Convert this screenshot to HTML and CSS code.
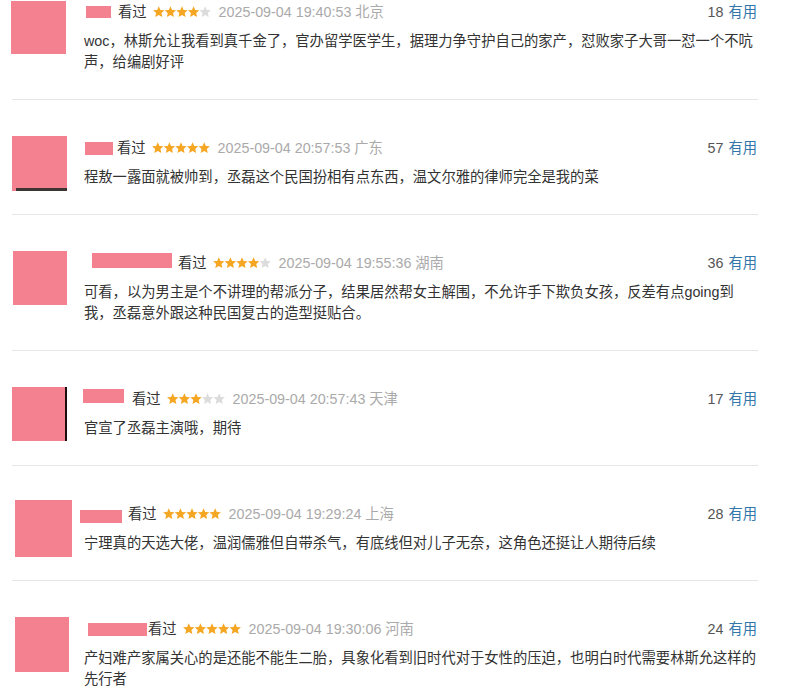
FILE: index.html
```html
<!DOCTYPE html>
<html lang="zh-CN">
<head>
<meta charset="utf-8">
<title>短评</title>
<link rel="stylesheet" href="styles.css">
</head>
<body>
<svg class="defs" width="0" height="0" aria-hidden="true">
  <symbol id="star" viewBox="0 0 12 12">
    <polygon points="6,0.2 7.7,4.05 11.9,4.48 8.76,7.3 9.64,11.42 6,9.3 2.36,11.42 3.24,7.3 0.1,4.48 4.3,4.05"/>
  </symbol>
</svg>
<div class="list">
  <div class="comment first">
    <div class="avatar-col"><div class="avatar av1"></div></div>
    <div class="content">
      <div class="head">
        <span class="name n1"></span><span class="watched">看过</span>
        <svg class="stars" viewBox="0 0 58 12"><use href="#star" class="on" x="0" width="11.6" height="11.6"/><use href="#star" class="on" x="11.6" width="11.6" height="11.6"/><use href="#star" class="on" x="23.2" width="11.6" height="11.6"/><use href="#star" class="on" x="34.8" width="11.6" height="11.6"/><use href="#star" class="off" x="46.4" width="11.6" height="11.6"/></svg>
        <span class="time">2025-09-04 19:40:53 北京</span>
        <span class="votes"><span class="count">18</span><a class="useful">有用</a></span>
      </div>
      <p class="text">woc，林斯允让我看到真千金了，官办留学医学生，据理力争守护自己的家产，怼败家子大哥一怼一个不吭声，给编剧好评</p>
    </div>
  </div>

  <div class="comment">
    <div class="avatar-col"><div class="avatar av2"></div></div>
    <div class="content">
      <div class="head">
        <span class="name n2"></span><span class="watched">看过</span>
        <svg class="stars" viewBox="0 0 58 12"><use href="#star" class="on" x="0" width="11.6" height="11.6"/><use href="#star" class="on" x="11.6" width="11.6" height="11.6"/><use href="#star" class="on" x="23.2" width="11.6" height="11.6"/><use href="#star" class="on" x="34.8" width="11.6" height="11.6"/><use href="#star" class="on" x="46.4" width="11.6" height="11.6"/></svg>
        <span class="time">2025-09-04 20:57:53 广东</span>
        <span class="votes"><span class="count">57</span><a class="useful">有用</a></span>
      </div>
      <p class="text">程敖一露面就被帅到，丞磊这个民国扮相有点东西，温文尔雅的律师完全是我的菜</p>
    </div>
  </div>

  <div class="comment">
    <div class="avatar-col"><div class="avatar av3"></div></div>
    <div class="content">
      <div class="head">
        <span class="name n3"></span><span class="watched">看过</span>
        <svg class="stars" viewBox="0 0 58 12"><use href="#star" class="on" x="0" width="11.6" height="11.6"/><use href="#star" class="on" x="11.6" width="11.6" height="11.6"/><use href="#star" class="on" x="23.2" width="11.6" height="11.6"/><use href="#star" class="on" x="34.8" width="11.6" height="11.6"/><use href="#star" class="off" x="46.4" width="11.6" height="11.6"/></svg>
        <span class="time">2025-09-04 19:55:36 湖南</span>
        <span class="votes"><span class="count">36</span><a class="useful">有用</a></span>
      </div>
      <p class="text">可看，以为男主是个不讲理的帮派分子，结果居然帮女主解围，不允许手下欺负女孩，反差有点going到我，丞磊意外跟这种民国复古的造型挺贴合。</p>
    </div>
  </div>

  <div class="comment">
    <div class="avatar-col"><div class="avatar av4"></div></div>
    <div class="content">
      <div class="head">
        <span class="name n4"></span><span class="watched">看过</span>
        <svg class="stars" viewBox="0 0 58 12"><use href="#star" class="on" x="0" width="11.6" height="11.6"/><use href="#star" class="on" x="11.6" width="11.6" height="11.6"/><use href="#star" class="on" x="23.2" width="11.6" height="11.6"/><use href="#star" class="off" x="34.8" width="11.6" height="11.6"/><use href="#star" class="off" x="46.4" width="11.6" height="11.6"/></svg>
        <span class="time">2025-09-04 20:57:43 天津</span>
        <span class="votes"><span class="count">17</span><a class="useful">有用</a></span>
      </div>
      <p class="text">官宣了丞磊主演哦，期待</p>
    </div>
  </div>

  <div class="comment">
    <div class="avatar-col"><div class="avatar av5"></div></div>
    <div class="content">
      <div class="head">
        <span class="name n5"></span><span class="watched">看过</span>
        <svg class="stars" viewBox="0 0 58 12"><use href="#star" class="on" x="0" width="11.6" height="11.6"/><use href="#star" class="on" x="11.6" width="11.6" height="11.6"/><use href="#star" class="on" x="23.2" width="11.6" height="11.6"/><use href="#star" class="on" x="34.8" width="11.6" height="11.6"/><use href="#star" class="on" x="46.4" width="11.6" height="11.6"/></svg>
        <span class="time">2025-09-04 19:29:24 上海</span>
        <span class="votes"><span class="count">28</span><a class="useful">有用</a></span>
      </div>
      <p class="text">宁理真的天选大佬，温润儒雅但自带杀气，有底线但对儿子无奈，这角色还挺让人期待后续</p>
    </div>
  </div>

  <div class="comment">
    <div class="avatar-col"><div class="avatar av6"></div></div>
    <div class="content">
      <div class="head">
        <span class="name n6"></span><span class="watched">看过</span>
        <svg class="stars" viewBox="0 0 58 12"><use href="#star" class="on" x="0" width="11.6" height="11.6"/><use href="#star" class="on" x="11.6" width="11.6" height="11.6"/><use href="#star" class="on" x="23.2" width="11.6" height="11.6"/><use href="#star" class="on" x="34.8" width="11.6" height="11.6"/><use href="#star" class="on" x="46.4" width="11.6" height="11.6"/></svg>
        <span class="time">2025-09-04 19:30:06 河南</span>
        <span class="votes"><span class="count">24</span><a class="useful">有用</a></span>
      </div>
      <p class="text">产妇难产家属关心的是还能不能生二胎，具象化看到旧时代对于女性的压迫，也明白时代需要林斯允这样的先行者</p>
    </div>
  </div>
</div>
</body>
</html>
```

FILE: styles.css
```css
* {
  box-sizing: border-box;
}

body {
  margin: 0;
  background: #fff;
  font-family: "Liberation Sans", Arial, "Noto Sans CJK SC", sans-serif;
  font-size: 14.3px;
  line-height: 21px;
  color: #333;
}

.defs {
  position: absolute;
  width: 0;
  height: 0;
  overflow: hidden;
}

.list {
  margin-left: 12px;
  width: 746px;
}

.comment {
  display: flex;
  align-items: flex-start;
  padding: 36px 0 22px;
  border-bottom: 1px solid #e6e6e6;
}

.comment.first {
  padding-top: 0;
}

.avatar-col {
  flex: none;
  width: 72px;
}

.avatar {
  width: 55px;
  height: 54px;
  background: #f4818f;
}

.av1 {
  margin-left: -1px;
  margin-top: 1px;
  height: 53px;
}

.av2 {
  height: 55px;
  background: linear-gradient(90deg, #f4818f 0 4px, transparent 4px),
              linear-gradient(#f4818f 0 52px, #3d3532 52px);
}

.av3 {
  margin-left: 1px;
  width: 54px;
}

.av4 {
  width: 55px;
  border-right: 2px solid #1e0d0d;
}

.av5 {
  margin-left: 3px;
  margin-top: -2px;
  width: 57px;
  height: 57px;
}

.av6 {
  margin-left: 3px;
  width: 54px;
  height: 55px;
}

.content {
  flex: none;
  width: 674px;
}

.head {
  display: flex;
  align-items: center;
  height: 20px;
  margin-top: 2px;
  line-height: 20px;
  white-space: nowrap;
}

.name {
  flex: none;
  height: 13px;
  background: #f4818f;
}

.n1 { width: 25px; height: 12px; margin-left: 2px; margin-right: 7px; }
.n2 { width: 28px; margin-left: 1px; margin-right: 4px; }
.n3 { width: 80px; height: 15px; margin-left: 8px; margin-right: 6px; margin-top: -5px; }
.n4 { width: 41px; height: 14px; margin-left: -1px; margin-right: 8px; margin-top: -6px; }
.n5 { width: 42px; margin-left: -4px; margin-right: 6px; margin-top: 5px; }
.n6 { width: 59px; margin-left: 4px; margin-right: 1px; }

.watched {
  color: #333;
}

.stars {
  flex: none;
  width: 58px;
  height: 12px;
  margin: 0 8px 0 6px;
}

.stars .on {
  fill: #f5a623;
}

.stars .off {
  fill: #dcdcdc;
}

.time {
  color: #aaa;
}

.votes {
  margin-left: auto;
  margin-right: 1px;
}

.count {
  color: #555;
  margin-right: 5px;
}

.useful {
  color: #37a;
  text-decoration: none;
}

.text {
  margin: 9px 0 4px;
  line-height: 21px;
  color: #333;
}
```
